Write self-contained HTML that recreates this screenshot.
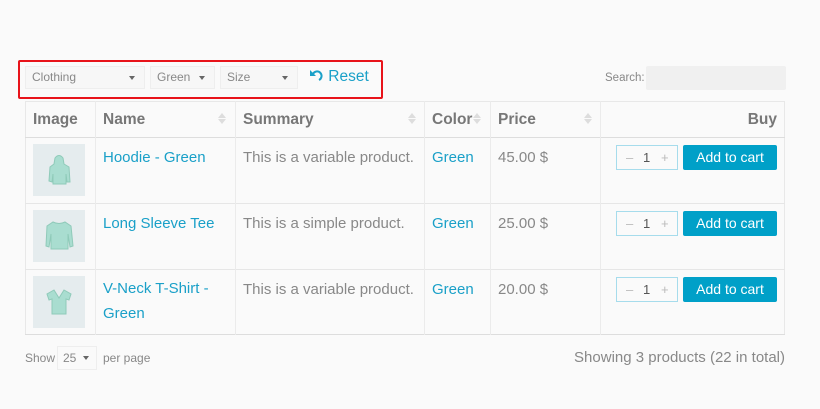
<!DOCTYPE html>
<html><head><style>
body{margin:0;width:820px;height:409px;background:#fafafa;font-family:"Liberation Sans",sans-serif;position:relative;overflow:hidden;color:#777}
.a{position:absolute}
.sel{position:absolute;top:66px;height:23px;background:#f7f7f7;border:1px solid #eee;box-sizing:border-box;font-size:12px;color:#888;line-height:21px;padding-left:6px}
.sel i{position:absolute;right:9px;top:9px;border-left:3px solid transparent;border-right:3px solid transparent;border-top:4px solid #666}
.vl{position:absolute;top:101px;height:234px;width:1px;background:#ebebeb}
.hl{position:absolute;left:25px;width:760px;height:1px;background:#e6e6e6}
.th{position:absolute;top:111px;font-weight:bold;font-size:15.5px;color:#777}
.td{position:absolute;font-size:15px;color:#888}
.ln{position:absolute;font-size:15px;color:#1aa0c8}
.img{position:absolute;left:33px;width:52px;height:52px;background:#e5ecee}
.qty{position:absolute;left:616px;width:62px;height:25px;border:1px solid #a6dcec;box-sizing:border-box;font-size:13px;color:#555}
.btn{position:absolute;left:683px;width:94px;height:25px;background:#00a0c8;color:#fff;font-size:14px;line-height:25px;text-align:center;border-radius:2px}
.sort{position:absolute;top:113px;width:0;height:0}
.sort:before{content:"";position:absolute;left:-4px;top:0;border:4px solid transparent;border-bottom:5px solid #ddd;border-top:0}
.sort:after{content:"";position:absolute;left:-4px;top:6px;border:4px solid transparent;border-top:5px solid #ddd;border-bottom:0}
</style></head><body>
<div class="a" style="left:18px;top:60px;width:361px;height:35px;border:2px solid #e8131a;border-radius:2px"></div>
<div class="sel" style="left:25px;width:120px">Clothing<i></i></div>
<div class="sel" style="left:150px;width:65px">Green<i></i></div>
<div class="sel" style="left:220px;width:78px">Size<i></i></div>
<div class="a" style="left:310px;top:68px;font-size:15.5px;color:#1aa0c8"><svg width="14" height="13" viewBox="0 0 14 13" style="vertical-align:-1px"><path d="M3 5 A4.5 4.5 0 1 1 9 11" fill="none" stroke="#1aa0c8" stroke-width="2"/><path d="M0 1 L0 7 L6 7 Z" fill="#1aa0c8"/></svg> Reset</div>
<div class="a" style="left:605px;top:72px;font-size:11.5px;color:#888">Search:</div>
<div class="a" style="left:646px;top:66px;width:140px;height:24px;background:#f0f0f0;border-radius:2px"></div>

<div class="a" style="left:25px;top:101px;width:760px;height:234px;border:1px solid #e8e8e8;box-sizing:border-box"></div>
<div class="hl" style="top:137px;background:#ddd"></div>
<div class="hl" style="top:203px"></div>
<div class="hl" style="top:269px"></div>
<div class="hl" style="top:334px;background:#ddd"></div>
<div class="vl" style="left:95px"></div><div class="vl" style="left:235px"></div><div class="vl" style="left:424px"></div><div class="vl" style="left:490px"></div><div class="vl" style="left:600px"></div>

<div class="th" style="left:33px">Image</div>
<div class="th" style="left:103px">Name</div><div class="sort" style="left:222px"></div>
<div class="th" style="left:243px">Summary</div><div class="sort" style="left:412px"></div>
<div class="th" style="left:432px">Color</div><div class="sort" style="left:477px"></div>
<div class="th" style="left:498px">Price</div><div class="sort" style="left:588px"></div>
<div class="th" style="right:43px">Buy</div>

<div class="img" style="top:144px"><svg width="52" height="52" viewBox="0 0 52 52"><path d="M22 14 Q26 9 30 14 L31 20 L36 23 L37 38 L34 38 L33 30 L33 40 L20 40 L20 30 L19 38 L16 37 L17 23 L21 20 Z" fill="#a9ddd0" stroke="#8fcab9" stroke-width="1"/></svg></div>
<div class="img" style="top:210px"><svg width="52" height="52" viewBox="0 0 52 52"><path d="M20 12 Q26 15 32 12 L38 16 L40 36 L37 37 L35 24 L35 39 L18 39 L18 24 L16 37 L13 36 L14 16 Z" fill="#a9ddd0" stroke="#8fcab9" stroke-width="1"/></svg></div>
<div class="img" style="top:276px"><svg width="52" height="52" viewBox="0 0 52 52"><path d="M21 14 L26 22 L31 14 L38 18 L36 24 L33 23 L33 38 L19 38 L19 23 L16 24 L14 18 Z" fill="#a9ddd0" stroke="#8fcab9" stroke-width="1"/></svg></div>
<div class="ln" style="left:103px;top:149px">Hoodie - Green</div>
<div class="ln" style="left:103px;top:215px">Long Sleeve Tee</div>
<div class="ln" style="left:103px;line-height:25px;top:276px">V-Neck T-Shirt -<br>Green</div>
<div class="td" style="left:243px;top:149px">This is a variable product.</div>
<div class="td" style="left:243px;top:215px">This is a simple product.</div>
<div class="td" style="left:243px;top:281px">This is a variable product.</div>
<div class="ln" style="left:432px;top:149px">Green</div><div class="ln" style="left:432px;top:215px">Green</div><div class="ln" style="left:432px;top:281px">Green</div>
<div class="td" style="left:498px;top:149px">45.00 $</div><div class="td" style="left:498px;top:215px">25.00 $</div><div class="td" style="left:498px;top:281px">20.00 $</div>

<div class="qty" style="top:145px"><span class="a" style="left:9px;top:4px;color:#bbb">–</span><span class="a" style="left:26px;top:4px">1</span><span class="a" style="left:44px;top:4px;color:#bbb">+</span></div>
<div class="qty" style="top:211px"><span class="a" style="left:9px;top:4px;color:#bbb">–</span><span class="a" style="left:26px;top:4px">1</span><span class="a" style="left:44px;top:4px;color:#bbb">+</span></div>
<div class="qty" style="top:277px"><span class="a" style="left:9px;top:4px;color:#bbb">–</span><span class="a" style="left:26px;top:4px">1</span><span class="a" style="left:44px;top:4px;color:#bbb">+</span></div>
<div class="btn" style="top:145px">Add to cart</div><div class="btn" style="top:211px">Add to cart</div><div class="btn" style="top:277px">Add to cart</div>

<div class="a" style="left:25px;top:351px;font-size:12px;color:#888">Show</div>
<div class="a" style="left:57px;top:346px;width:40px;height:24px;border:1px solid #eee;box-sizing:border-box;font-size:12px;color:#888;line-height:22px;padding-left:5px">25<i style="position:absolute;left:25px;top:9px;border-left:3px solid transparent;border-right:3px solid transparent;border-top:4px solid #666"></i></div>
<div class="a" style="left:103px;top:351px;font-size:12px;color:#888">per page</div>
<div class="a" style="right:35px;top:349px;font-size:15px;color:#888">Showing 3 products (22 in total)</div>
</body></html>
